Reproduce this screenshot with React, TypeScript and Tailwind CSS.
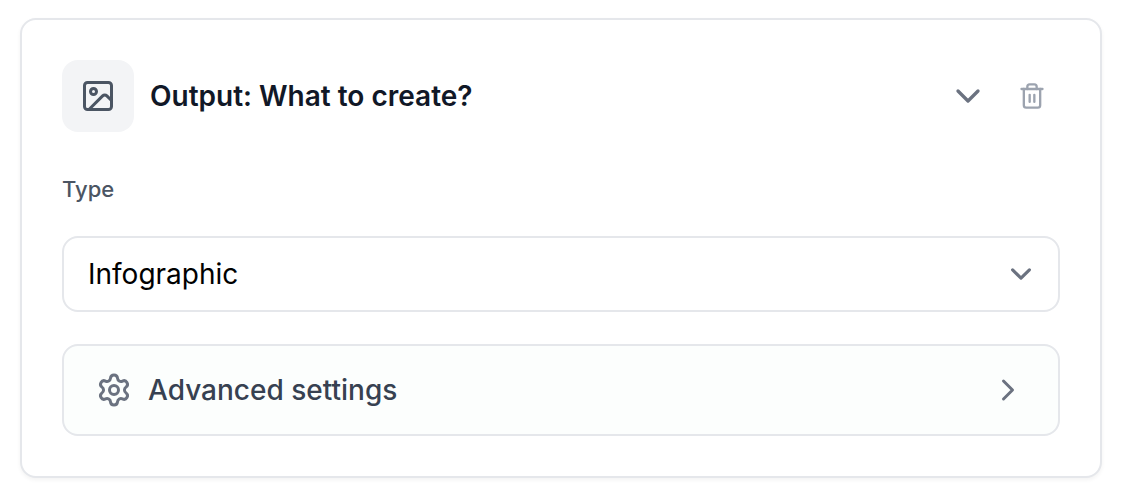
import { useState } from 'react';
import { ChevronDown, ChevronRight, Image, Settings, Trash2 } from 'lucide-react';

const OUTPUT_TYPES = ['Infographic', 'Summary', 'Slides', 'Report'];

export default function App() {
  const [type, setType] = useState('Infographic');

  return (
    <main className="px-5 py-[18px] font-['Inter',sans-serif]">
      <section className="mr-[2px] rounded-2xl border-2 border-[#e5e7eb] bg-white p-10 shadow-[0_2px_4px_rgba(0,0,0,0.05)]">
        {/* Header */}
        <div className="flex items-center justify-between">
          <div className="flex items-center gap-4">
            <div className="flex size-[72px] items-center justify-center rounded-2xl bg-[#f3f4f6] text-[#4b5563]">
              <Image className="size-9" />
            </div>
            <h2 className="text-[28px] leading-10 font-semibold text-[#111827]">Output: What to create?</h2>
          </div>
          <div className="flex items-center gap-4">
            <button type="button" aria-label="Collapse" className="text-[#6b7280]">
              <ChevronDown className="size-10" />
            </button>
            <button type="button" aria-label="Delete" className="p-[14px] text-[#9ca3af]">
              <Trash2 className="size-7" />
            </button>
          </div>
        </div>

        {/* Output type */}
        <div className="mt-10">
          <label htmlFor="output-type" className="block text-[22px] leading-[34px] font-medium text-[#4b5563]">
            Type
          </label>
          <div className="relative mt-[30px]">
            <select
              id="output-type"
              value={type}
              onChange={(e) => setType(e.target.value)}
              className="block h-[76px] w-full appearance-none rounded-2xl border-2 border-[#e5e7eb] bg-white px-6 text-[28px] leading-10 text-black"
            >
              {OUTPUT_TYPES.map((item) => (
                <option key={item}>{item}</option>
              ))}
            </select>
            <div className="pointer-events-none absolute inset-y-0 right-[18px] flex items-center text-[#6b7280]">
              <svg
                className="size-[42px]"
                viewBox="0 0 20 20"
                fill="none"
                stroke="currentColor"
                strokeWidth="1.5"
                strokeLinecap="round"
                strokeLinejoin="round"
                aria-hidden="true"
              >
                <path d="M6 8l4 4 4-4" />
              </svg>
            </div>
          </div>
        </div>

        {/* Advanced settings */}
        <button
          type="button"
          className="mt-8 flex w-full items-center justify-between rounded-2xl border-2 border-[#e5e7eb] bg-[#fcfefd] px-8 py-6 text-[#6b7280]"
        >
          <span className="flex items-center gap-4">
            <Settings className="size-9" />
            <span className="text-[28px] leading-10 font-medium text-[#374151]">Advanced settings</span>
          </span>
          <ChevronRight className="size-9" />
        </button>
      </section>
    </main>
  );
}
